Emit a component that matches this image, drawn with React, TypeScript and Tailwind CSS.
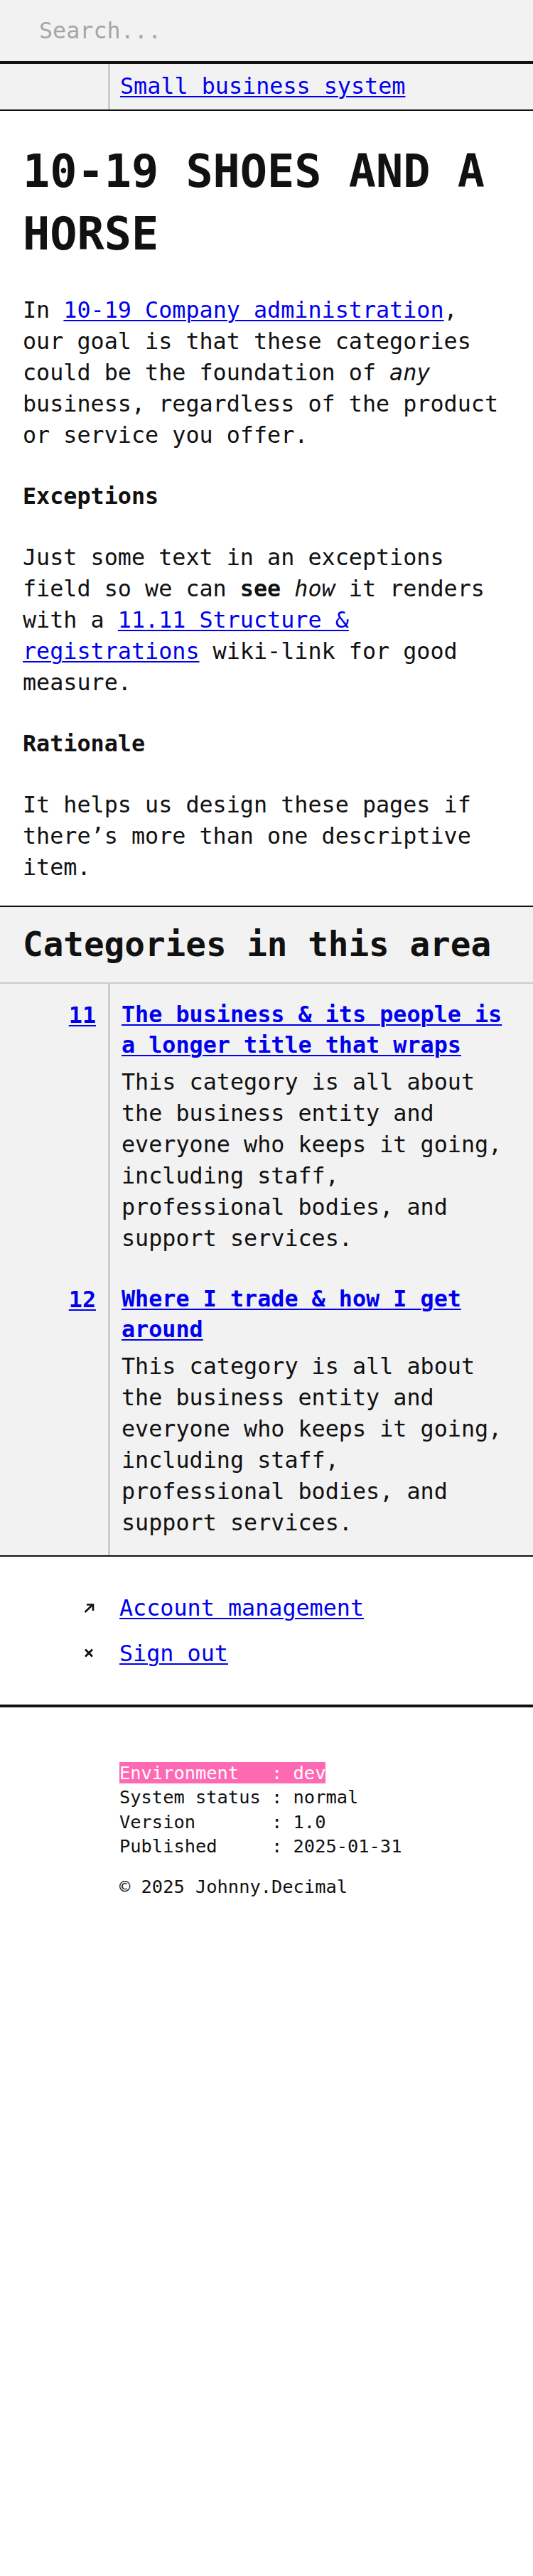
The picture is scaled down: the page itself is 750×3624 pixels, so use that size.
const categories = [
  {
    id: '11',
    title: 'The business & its people is a longer title that wraps',
    description:
      'This category is all about the business entity and everyone who keeps it going, including staff, professional bodies, and support services.',
  },
  {
    id: '12',
    title: 'Where I trade & how I get around',
    description:
      'This category is all about the business entity and everyone who keeps it going, including staff, professional bodies, and support services.',
  },
]

const linkClass = 'text-[#0000ee] underline decoration-[2px] underline-offset-[3px]'

function ArrowIcon() {
  return (
    <svg width="15" height="13" viewBox="0 0 15 13" fill="none" stroke="#111" strokeWidth="2.6">
      <path d="M1.5 12 L12.5 1.5" />
      <path d="M4 1.5 H13 V10" />
    </svg>
  )
}

function CrossIcon() {
  return (
    <svg width="14" height="13" viewBox="0 0 14 13" fill="none" stroke="#111" strokeWidth="2.8">
      <path d="M2 1.5 L12 11.5" />
      <path d="M12 1.5 L2 11.5" />
    </svg>
  )
}

export default function App() {
  return (
    <div className="min-h-[3624px] bg-white text-[#111] font-['DejaVu_Sans_Mono',monospace] text-[31.75px] leading-[44px]">
      {/* search */}
      <input
        placeholder="Search..."
        className="block h-[90px] w-full bg-[#f2f2f2] pl-[55px] text-[31.75px] outline-none border-b-4 border-[#111] placeholder:text-[#a6a6a6]"
      />

      {/* breadcrumb */}
      <div className="grid grid-cols-[155px_1fr] bg-[#f2f2f2] border-b-2 border-[#111]">
        <div className="border-r-[3px] border-[#cccccc]" />
        <div className="pl-[14px] pt-[9px] pb-[11px]">
          <a href="#" className={linkClass}>Small business system</a>
        </div>
      </div>

      <main className="px-8 pt-[41px] pb-[32px]">
        <h1 className="text-[63.5px] leading-[88px] font-bold mb-[41px]">10-19 SHOES AND A HORSE</h1>

        <div className="space-y-[42px]">
          <p>
            In <a href="#" className={linkClass}>10-19 Company administration</a>, our goal is that these
            categories could be the foundation of <em>any</em> business, regardless of the product or
            service you offer.
          </p>
          <h3 className="font-bold">Exceptions</h3>
          <p>
            Just some text in an exceptions field so we can <strong>see</strong> <em>how</em> it renders
            with a <a href="#" className={linkClass}>11.11 Structure &amp; registrations</a> wiki-link for
            good measure.
          </p>
          <h3 className="font-bold">Rationale</h3>
          <p>It helps us design these pages if there’s more than one descriptive item.</p>
        </div>
      </main>

      {/* categories */}
      <section className="bg-[#f2f2f2] border-t-2 border-[#111]">
        <h2 className="px-8 pt-[19.5px] pb-[20.5px] text-[47.6px] leading-[66px] font-bold border-b-2 border-[#cccccc]">
          Categories in this area
        </h2>
        <div className="grid grid-cols-[155px_1fr] border-b-2 border-[#111]">
          {categories.map((cat, i) => {
            const pad = i === 0 ? 'pt-[22px] pb-[42px]' : 'pt-0 pb-[24px]'
            return (
              <div key={cat.id} className="contents">
                <div className={`border-r-[3px] border-[#cccccc] text-right pr-[17px] ${pad}`}>
                  <a href="#" className={`${linkClass} font-bold leading-[42.5px]`}>{cat.id}</a>
                </div>
                <div className={`pl-[16px] pr-8 ${pad}`}>
                  <h3 className="font-bold leading-[42.5px]">
                    <a href="#" className={linkClass}>{cat.title}</a>
                  </h3>
                  <p className="mt-[9px]">{cat.description}</p>
                </div>
              </div>
            )
          })}
        </div>
      </section>

      {/* account links */}
      <nav className="pt-[50px] pb-[50px] border-b-4 border-[#111]">
        <ul className="flex flex-col gap-[19.5px]">
          <li className="flex items-center pl-[118px]">
            <span className="w-[50px] flex items-center"><ArrowIcon /></span>
            <a href="#" className={linkClass}>Account management</a>
          </li>
          <li className="flex items-center pl-[118px]">
            <span className="w-[50px] flex items-center"><CrossIcon /></span>
            <a href="#" className={linkClass}>Sign out</a>
          </li>
        </ul>
      </nav>

      {/* footer */}
      <footer className="pl-[168px] pt-[75.5px] text-[25.4px] leading-[34.3px] whitespace-pre">
        <div><span className="bg-[#ff69b4] text-white">Environment   : dev</span></div>
        <div>System status : normal</div>
        <div>Version       : 1.0</div>
        <div>Published     : 2025-01-31</div>
        <div className="mt-[23px]">© 2025 Johnny.Decimal</div>
      </footer>
    </div>
  )
}
